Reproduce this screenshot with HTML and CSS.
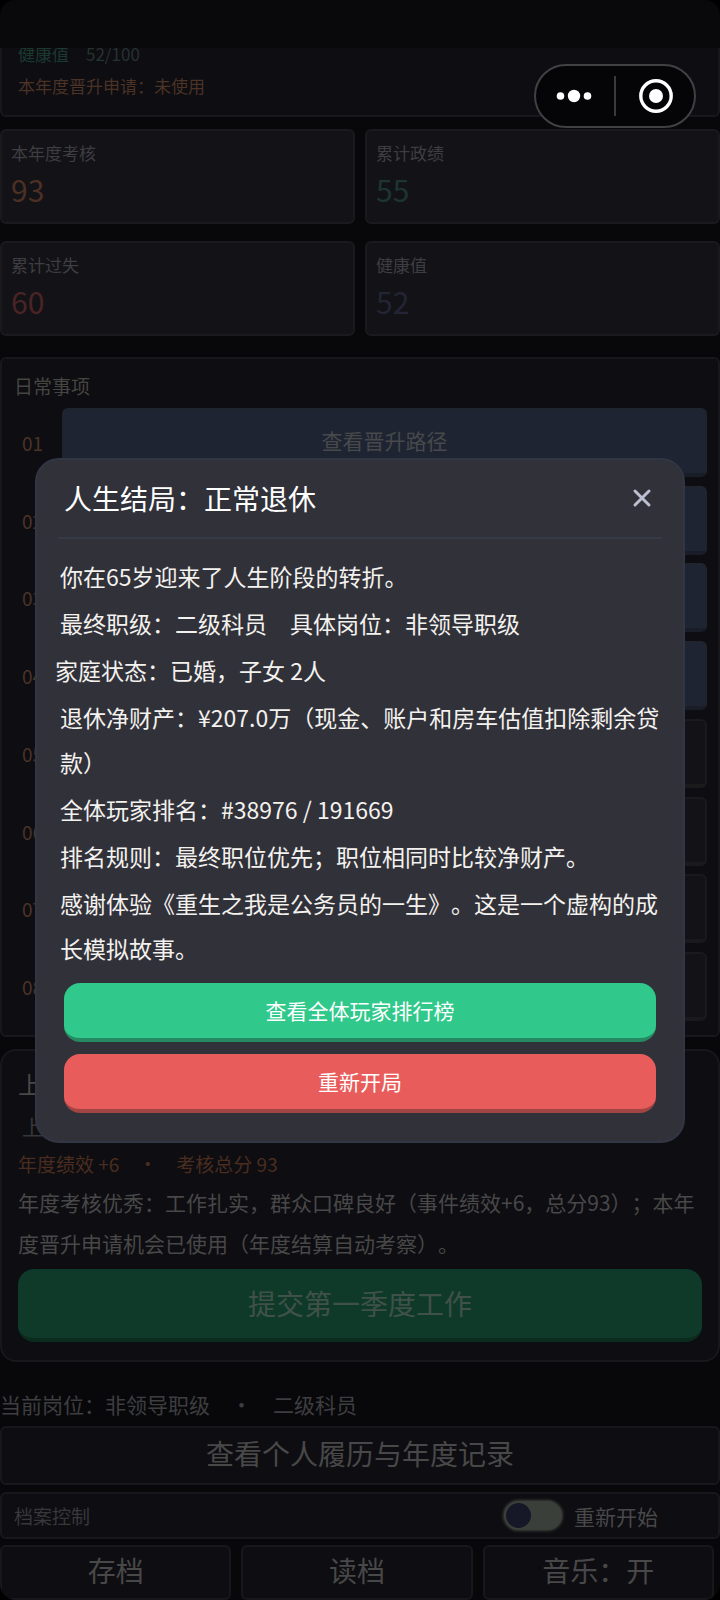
FILE: index.html
```html
<!DOCTYPE html>
<html lang="zh-CN">
<head>
    <meta charset="UTF-8">
    <meta name="viewport" content="width=device-width, initial-scale=1.0">
    <title>重生之我是公务员的一生</title>
    <link rel="stylesheet" href="styles.css">
</head>
<body>
    <div class="app">
        <header class="topbar"></header>

        <!-- Mini program capsule -->
        <div class="capsule">
            <button class="capsule-button" aria-label="更多">
                <svg width="36" height="36" viewBox="0 0 36 36" fill="#fff">
                    <circle cx="4.5" cy="18" r="3.8"/>
                    <circle cx="18" cy="18" r="6.2"/>
                    <circle cx="31.5" cy="18" r="3.8"/>
                </svg>
            </button>
            <span class="capsule-line"></span>
            <button class="capsule-button" aria-label="关闭">
                <svg width="36" height="36" viewBox="0 0 36 36">
                    <circle cx="18" cy="18" r="15.2" fill="none" stroke="#fff" stroke-width="3.4"/>
                    <circle cx="18" cy="18" r="7" fill="#fff"/>
                </svg>
            </button>
        </div>

        <main>
            <section class="status">
                <div class="health">健康值　<span class="health-value">52/100</span></div>
                <div class="apply">本年度晋升申请：未使用</div>
            </section>

            <section class="stats">
                <div class="stat">
                    <div class="stat-label">本年度考核</div>
                    <div class="stat-value orange">93</div>
                </div>
                <div class="stat">
                    <div class="stat-label">累计政绩</div>
                    <div class="stat-value teal">55</div>
                </div>
                <div class="stat">
                    <div class="stat-label">累计过失</div>
                    <div class="stat-value red">60</div>
                </div>
                <div class="stat">
                    <div class="stat-label">健康值</div>
                    <div class="stat-value blue">52</div>
                </div>
            </section>

            <section class="daily">
                <h2 class="daily-title">日常事项</h2>
                <div class="daily-list">
                    <div class="daily-row"><span class="daily-no">01</span><button class="daily-button primary">查看晋升路径</button></div>
                    <div class="daily-row"><span class="daily-no">02</span><button class="daily-button primary" aria-label="事项02"></button></div>
                    <div class="daily-row"><span class="daily-no">03</span><button class="daily-button primary" aria-label="事项03"></button></div>
                    <div class="daily-row"><span class="daily-no">04</span><button class="daily-button primary" aria-label="事项04"></button></div>
                    <div class="daily-row"><span class="daily-no">05</span><button class="daily-button" aria-label="事项05"></button></div>
                    <div class="daily-row"><span class="daily-no">06</span><button class="daily-button" aria-label="事项06"></button></div>
                    <div class="daily-row"><span class="daily-no">07</span><button class="daily-button" aria-label="事项07"></button></div>
                    <div class="daily-row"><span class="daily-no">08</span><button class="daily-button" aria-label="事项08"></button></div>
                </div>
            </section>

            <section class="report">
                <h2 class="report-title">上年</h2>
                <div class="report-sub">上年</div>
                <div class="report-score">年度绩效 +6　・　考核总分 93</div>
                <p class="report-text">年度考核优秀：工作扎实，群众口碑良好（事件绩效+6，总分93）；本年度晋升申请机会已使用（年度结算自动考察）。</p>
                <button class="submit-button">提交第一季度工作</button>
            </section>

            <div class="post">当前岗位：非领导职级　・　二级科员</div>
            <button class="record-button">查看个人履历与年度记录</button>

            <div class="archive">
                <span class="archive-title">档案控制</span>
                <label class="restart">
                    <input class="switch" type="checkbox">
                    重新开始
                </label>
            </div>

            <div class="archive-buttons">
                <button class="archive-button">存档</button>
                <button class="archive-button">读档</button>
                <button class="archive-button">音乐：开</button>
            </div>
        </main>
    </div>

    <!-- Ending dialog -->
    <div class="overlay">
        <div class="modal" role="dialog" aria-labelledby="modal-title">
            <div class="modal-header">
                <h1 class="modal-title" id="modal-title">人生结局：正常退休</h1>
                <button class="modal-close" aria-label="关闭">
                    <svg width="20" height="20" viewBox="0 0 20 20" fill="none" stroke="#bcbfd0" stroke-width="3" stroke-linecap="round">
                        <path d="M3 3L17 17M17 3L3 17"/>
                    </svg>
                </button>
            </div>
            <div class="modal-body">
                <p>你在65岁迎来了人生阶段的转折。</p>
                <p>最终职级：二级科员　具体岗位：非领导职级</p>
                <p class="flush">家庭状态：已婚，子女 2人</p>
                <p>退休净财产：¥207.0万（现金、账户和房车估值扣除剩余贷款）</p>
                <p>全体玩家排名：#38976 / 191669</p>
                <p>排名规则：最终职位优先；职位相同时比较净财产。</p>
                <p>感谢体验《重生之我是公务员的一生》。这是一个虚构的成长模拟故事。</p>
            </div>
            <div class="modal-actions">
                <button class="modal-button green">查看全体玩家排行榜</button>
                <button class="modal-button coral">重新开局</button>
            </div>
        </div>
    </div>
</body>
</html>
```

FILE: styles.css
```css
* {
    box-sizing: border-box;
}

html {
    background-color: #000;
}

body {
    margin: 0;
    font-family: "Noto Sans CJK SC", sans-serif;
    text-spacing-trim: space-all;
    color: #484848;
}

h1, h2, p {
    margin: 0;
    font-weight: normal;
}

button {
    display: block;
    padding: 0;
    border: none;
    background: none;
    color: inherit;
    font-family: inherit;
    cursor: pointer;
}

svg {
    display: block;
}

.app {
    background-color: #08080a;
    border-radius: 16px;
    overflow: hidden;
}

.topbar {
    position: relative;
    z-index: 1;
    height: 48px;
    background-color: #09090b;
}

/* Capsule in the top right corner */
.capsule {
    position: fixed;
    top: 64px;
    right: 24px;
    z-index: 2;
    display: flex;
    align-items: center;
    justify-content: space-between;
    width: 162px;
    height: 64px;
    padding: 0 20px;
    border: 2px solid #414143;
    border-radius: 32px;
    background-color: #050507;
}

.capsule-line {
    width: 2px;
    height: 40px;
    background-color: #3a3a3c;
}

/* Status card, scrolled under the top bar */
.status {
    margin-top: -20px;
    padding: 10px 16px 13px;
    border: 2px solid #18181c;
    border-top: none;
    border-radius: 6px;
    background-color: #0e0d12;
    font-size: 17px;
    line-height: 32px;
}

.health {
    color: #1b3a2f;
}

.health-value {
    color: #25332f;
}

.apply {
    color: #4b3326;
}

/* Stats */
.stats {
    display: grid;
    grid-template-columns: 1fr 1fr;
    gap: 17px 10px;
    margin-top: 12px;
}

.stat {
    padding: 9px 10px 15px 9px;
    border: 2px solid #1a1a1d;
    border-radius: 6px;
    background-color: #131217;
}

.stat-label {
    font-size: 17px;
    line-height: 26px;
    color: #3e3e42;
}

.stat-value {
    margin-top: 5px;
    font-size: 30px;
    line-height: 36px;
}

.orange { color: #4b3024; }
.teal { color: #1c3534; }
.red { color: #4a2425; }
.blue { color: #222534; }

/* Daily actions */
.daily {
    margin-top: 21px;
    padding: 13px 11px 14px 12px;
    border: 2px solid #18181c;
    border-radius: 6px;
    background-color: #0e0d12;
}

.daily-title {
    font-size: 19px;
    line-height: 28px;
    color: #454541;
}

.daily-list {
    display: flex;
    flex-direction: column;
    justify-content: space-between;
    min-height: 613px;
    margin-top: 8px;
}

.daily-row {
    display: flex;
    align-items: center;
}

.daily-no {
    width: 48px;
    padding-left: 8px;
    font-size: 19px;
    color: #4b3326;
}

.daily-button {
    flex: 1;
    height: 69px;
    padding-bottom: 4px;
    border: 2px solid #1a1a1d;
    border-bottom-width: 4px;
    border-radius: 6px;
    background-color: #131217;
    font-size: 21px;
    color: #47494b;
}

.daily-button.primary {
    border-color: #20242e;
    border-bottom-color: #181d27;
    background-color: #1e2432;
}

/* Yearly report */
.report {
    margin-top: 12px;
    padding: 15px 16px 18px;
    border: 2px solid #18181c;
    border-radius: 16px;
    background-color: #0e0d12;
}

.report-title {
    font-size: 24px;
    line-height: 36px;
}

.report-sub {
    margin-top: 4px;
    padding-left: 4px;
    font-size: 21px;
    line-height: 40px;
    color: #37373a;
}

.report-score {
    font-size: 19px;
    line-height: 36px;
    color: #4a2d1e;
}

.report-text {
    font-size: 21px;
    line-height: 41px;
}

.submit-button {
    width: 100%;
    height: 73px;
    margin-top: 5px;
    padding-bottom: 2px;
    border-bottom: 4px solid #0b2b1f;
    border-radius: 16px;
    background-color: #0f3a29;
    font-size: 28px;
    color: #40514a;
}

/* Footer controls */
.post {
    margin-top: 21px;
    margin-bottom: 1px;
    font-size: 21px;
    line-height: 42px;
    color: #3e3e41;
}

.record-button,
.archive,
.archive-button {
    border: 2px solid #18181c;
    border-radius: 6px;
    background-color: #0e0d12;
}

.record-button {
    width: 100%;
    height: 59px;
    padding-bottom: 6px;
    font-size: 28px;
}

.archive {
    display: flex;
    align-items: center;
    justify-content: space-between;
    height: 47px;
    margin-top: 7px;
    padding: 0 60px 0 12px;
}

.archive-title {
    font-size: 19px;
    color: #38383b;
}

.restart {
    display: flex;
    align-items: center;
    gap: 12px;
    font-size: 21px;
}

.switch {
    appearance: none;
    width: 58px;
    height: 29px;
    margin: 0;
    padding: 2px;
    border-radius: 15px;
    background-color: #3b3f39;
    box-shadow: 0 0 3px 1px #3b3f39;
}

.switch::before {
    content: "";
    display: block;
    width: 25px;
    height: 25px;
    border-radius: 50%;
    background-color: #161727;
}

.switch:checked::before {
    margin-left: auto;
}

.archive-buttons {
    display: grid;
    grid-template-columns: repeat(3, 1fr);
    gap: 10px;
    margin-top: 6px;
    padding-right: 6px;
}

.archive-button {
    height: 55px;
    padding-bottom: 6px;
    font-size: 28px;
}

/* Ending dialog */
.overlay {
    position: fixed;
    inset: 0;
    z-index: 3;
    display: flex;
    align-items: center;
    justify-content: center;
    padding: 0 35px;
}

.modal {
    width: 100%;
    border: 2px solid #303644;
    border-radius: 24px;
    background-color: #31313a;
}

.modal-header {
    display: flex;
    align-items: center;
    justify-content: space-between;
    margin: 0 21px;
    padding: 0 10px 0 6px;
    border-bottom: 2px solid #363a45;
}

.modal-title {
    font-size: 28px;
    line-height: 77px;
    color: #fff;
}

.modal-body {
    display: flex;
    flex-direction: column;
    gap: 2px;
    padding: 15px 18px 12px;
    font-size: 23px;
    line-height: 45px;
    color: #f4f2ee;
}

.modal-body p {
    padding-left: 5px;
}

.modal-body .flush {
    padding-left: 0;
}

.modal-actions {
    display: flex;
    flex-direction: column;
    gap: 12px;
    padding: 0 27px 28px;
}

.modal-button {
    height: 59px;
    padding-bottom: 1px;
    border-bottom: 4px solid;
    border-radius: 16px;
    font-size: 21px;
    color: #fff;
}

.modal-button.green {
    border-color: #258a62;
    background-color: #30c98b;
}

.modal-button.coral {
    border-color: #a04444;
    background-color: #e85d5c;
}
```
